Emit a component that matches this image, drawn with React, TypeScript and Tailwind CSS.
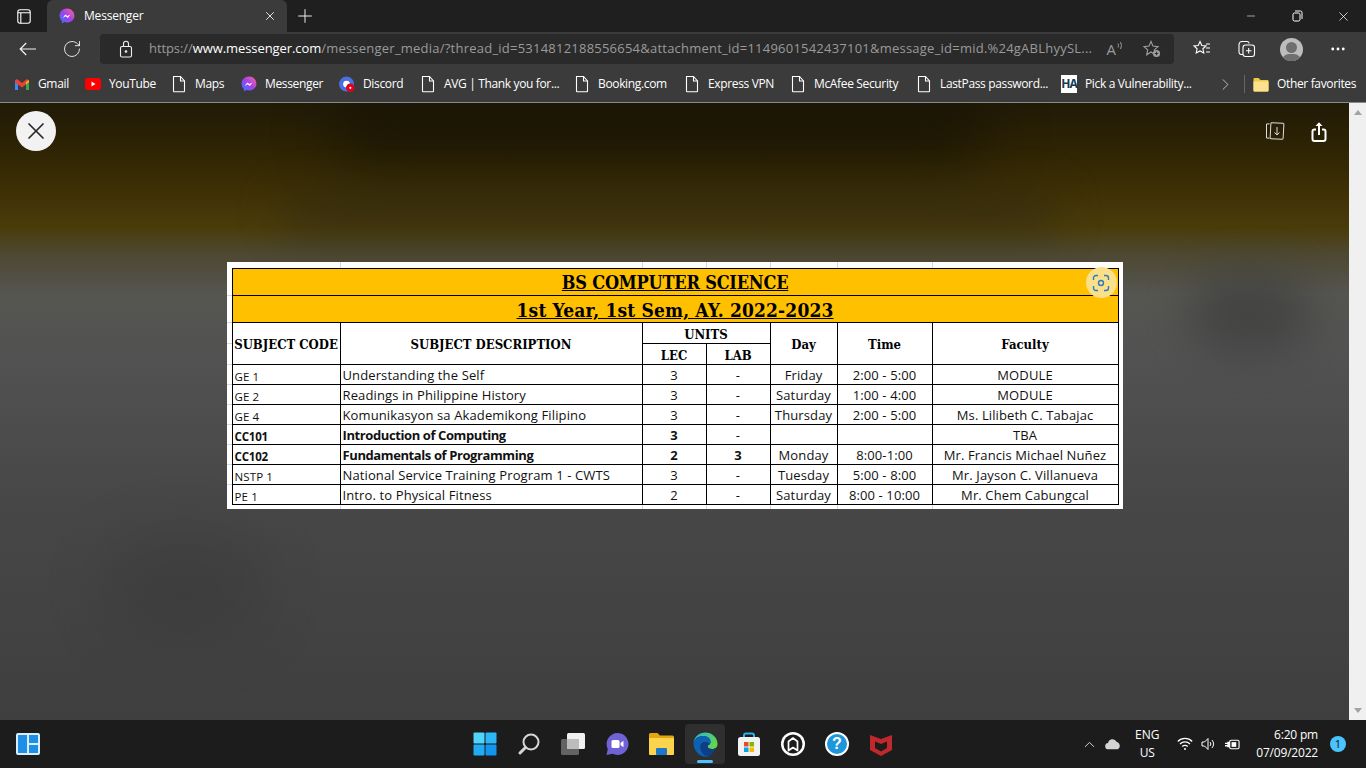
import { ChevronRight, ChevronUp, Minus, MoreHorizontal, Plus, RotateCw, X } from "lucide-react";

const sans = "font-['Open_Sans','Noto_Sans',sans-serif]";
const serif = "font-['DejaVu_Serif_Condensed','Liberation_Serif',serif]";

const rows = [
  { code: "GE 1", desc: "Understanding the Self", lec: "3", lab: "-", day: "Friday", time: "2:00 - 5:00", faculty: "MODULE" },
  { code: "GE 2", desc: "Readings in Philippine History", lec: "3", lab: "-", day: "Saturday", time: "1:00 - 4:00", faculty: "MODULE" },
  { code: "GE 4", desc: "Komunikasyon sa Akademikong Filipino", lec: "3", lab: "-", day: "Thursday", time: "2:00 - 5:00", faculty: "Ms. Lilibeth C. Tabajac" },
  { code: "CC101", desc: "Introduction of Computing", lec: "3", lab: "-", day: "", time: "", faculty: "TBA", bold: true },
  { code: "CC102", desc: "Fundamentals of Programming", lec: "2", lab: "3", day: "Monday", time: "8:00-1:00", faculty: "Mr. Francis Michael Nuñez", bold: true },
  { code: "NSTP 1", desc: "National Service Training Program 1 - CWTS", lec: "3", lab: "-", day: "Tuesday", time: "5:00 - 8:00", faculty: "Mr. Jayson C. Villanueva" },
  { code: "PE 1", desc: "Intro. to Physical Fitness", lec: "2", lab: "-", day: "Saturday", time: "8:00 - 10:00", faculty: "Mr. Chem Cabungcal" },
];

// sheet gridlines peeking out round the table
const gridCols = ["w-[114px]", "w-[302px]", "w-[64px]", "w-[64px]", "w-[67px]", "w-[95px]"];
const gridRows = [33, 60, 81, 102, 122, 142, 162, 182, 202, 222];

function MessengerIcon({ size = 16 }: { size?: number }) {
  return (
    <svg width={size} height={size} viewBox="0 0 16 16">
      <defs>
        <linearGradient id="msg" x1="0" y1="1" x2="1" y2="0">
          <stop offset="0" stopColor="#2f7bff" />
          <stop offset="0.5" stopColor="#a33ef0" />
          <stop offset="1" stopColor="#ff6a8a" />
        </linearGradient>
      </defs>
      <path d="M8 .6C3.8.6.6 3.6.6 7.7c0 2.1.9 4 2.3 5.2v2.5l2.3-1.3c.9.3 1.8.4 2.8.4 4.2 0 7.4-3 7.4-6.8S12.2.6 8 .6z" fill="url(#msg)" />
      <path d="M3.7 9.9 6.2 6.4l2.3 1.7 2.9-1.7-2.5 3.5-2.3-1.7z" fill="#fff" />
    </svg>
  );
}

function FileIcon() {
  return (
    <svg width="16" height="18" viewBox="0 0 16 18" fill="none" stroke="#fff" strokeWidth="1.1">
      <path d="M2.5 1.5h7l4 4.5v10a.8.8 0 0 1-.8.8H3.3a.8.8 0 0 1-.8-.8z" />
      <path d="M9.5 1.5V6h4" />
    </svg>
  );
}

function Bookmark({ icon, label, width }: { icon: React.ReactNode; label: string; width: string }) {
  return (
    <div className={`flex items-center gap-2 shrink-0 ${width}`}>
      <span className="flex w-4 h-4 items-center justify-center shrink-0">{icon}</span>
      <span className="text-[12px] text-white whitespace-nowrap tracking-[-0.35px]">{label}</span>
    </div>
  );
}

function TitleBar() {
  return (
    <div className="h-8 bg-[#1f1f1f] flex items-end shrink-0 text-white">
      <div className="w-[47px] h-8 flex items-center justify-center">
        <svg width="14" height="15" viewBox="0 0 14 15" fill="none" stroke="#fff" strokeWidth="1.1">
          <rect x=".8" y=".8" width="12.4" height="13.4" rx="2.2" />
          <path d="M.8 3.8h12.4M3.8 3.8v10.4" />
        </svg>
      </div>
      <div className="w-[240px] h-8 bg-[#3b3b3b] rounded-t-md flex items-center pl-3 pr-[10px]">
        <MessengerIcon />
        <span className="ml-[9px] text-[12px] tracking-[-0.2px] flex-1">Messenger</span>
        <X size={14} strokeWidth={1.6} color="#eee" />
      </div>
      <div className="w-[36px] h-8 flex items-center justify-center">
        <Plus size={22} strokeWidth={1} />
      </div>
      <div className="flex-1" />
      <div className="flex h-8 items-center">
        <div className="w-[46px] flex justify-center"><Minus size={12} strokeWidth={1.2} /></div>
        <div className="w-[46px] flex justify-center">
          <svg width="11" height="12" viewBox="0 0 11 12" fill="none" stroke="#fff">
            <rect x="1" y="3" width="7" height="8" rx="1.5" />
            <path d="M3 1h5.5A1.5 1.5 0 0 1 10 2.5V9" />
          </svg>
        </div>
        <div className="w-[46px] flex justify-center"><X size={15} strokeWidth={1.2} /></div>
      </div>
    </div>
  );
}

function AddressBar() {
  return (
    <div className="h-[34px] bg-[#3b3b3b] flex items-center shrink-0 text-white">
      <div className="w-[56px] flex justify-center">
        <svg width="18" height="14" viewBox="0 0 18 14" fill="none" stroke="#f4f4f4" strokeWidth="1.2">
          <path d="M17 7H1.2M7.2 1 1.2 7l6 6" />
        </svg>
      </div>
      <div className="w-[32px] flex justify-center"><RotateCw size={20} strokeWidth={1} /></div>
      <div className="ml-[12px] w-[1074px] h-[30px] bg-[#2a2a2a] rounded flex items-center pl-[19px] pr-[12px]">
        <svg width="14" height="18" viewBox="0 0 14 18" fill="none" stroke="#eee" strokeWidth="1.1" className="shrink-0">
          <rect x="1.5" y="6.5" width="11" height="10.5" rx="1.5" />
          <path d="M4.5 6.5V3.8a2.5 2.5 0 0 1 5 0v2.7" />
          <circle cx="7" cy="11.5" r=".8" fill="#eee" />
        </svg>
        <div className="ml-[16px] text-[13px] whitespace-nowrap text-[#9a9a9a] w-[945px] shrink-0 tracking-[0.23px]">
          <span className="tracking-[-0.08px]">https://</span>
          <span className="text-white tracking-[-0.08px]">www.messenger.com</span>
          /messenger_media/?thread_id=5314812188556654&amp;attachment_id=1149601542437101&amp;message_id=mid.%24gABLhyySL...
        </div>
        <div className="flex-1" />
        <span className="text-[15px] leading-none text-[#9a9a9a] mr-[1px]">A</span>
        <svg width="6" height="10" viewBox="0 0 6 10" fill="none" stroke="#9a9a9a" className="mr-[19px] -mt-[6px]">
          <path d="M1 2.5a4 4 0 0 1 0 4M3.5 1a7 7 0 0 1 0 7" />
        </svg>
        <svg width="20" height="20" viewBox="0 0 20 20" fill="none" stroke="#a0a0a0" strokeWidth="1.1">
          <path d="M9 2.5l2 4.6 5 .5-3.7 3.3 1 4.9L9 13l-4.3 2.8 1-4.9L2 7.6l5-.5z" />
          <circle cx="14.5" cy="14.5" r="3.6" fill="#a0a0a0" stroke="none" />
          <path d="M14.5 12.7v3.6M12.7 14.5h3.6" stroke="#333" />
        </svg>
      </div>
      <div className="ml-[16px] w-6 flex justify-center">
        <svg width="20" height="20" viewBox="0 0 20 20" fill="none" stroke="#fff" strokeWidth="1.1">
          <path d="M8 2.5l1.8 4 4.2.5-3.1 2.8.9 4.2L8 11.9l-3.8 2.1.9-4.2L2 7l4.2-.5z" />
          <path d="M14 5h4M14 9h4M14 13h4" />
        </svg>
      </div>
      <div className="ml-[21px] w-6 flex justify-center">
        <svg width="20" height="20" viewBox="0 0 20 20" fill="none" stroke="#fff" strokeWidth="1.1">
          <path d="M6 15.5H4.5A2.5 2.5 0 0 1 2 13V5.5A3 3 0 0 1 5 2.5h5a2 2 0 0 1 2 2" />
          <rect x="6" y="6" width="11.5" height="11.5" rx="2.5" />
          <path d="M11.7 9v5.5M9 11.7h5.5" />
        </svg>
      </div>
      <div className="ml-[21px] w-[23px] h-[23px] rounded-full bg-[#bdbdbd] overflow-hidden relative">
        <div className="absolute left-[6px] top-[4px] w-[11px] h-[11px] rounded-full bg-[#6f6f6f]" />
        <div className="absolute left-[2px] top-[16px] w-[19px] h-[14px] rounded-full bg-[#6f6f6f]" />
      </div>
      <div className="ml-[25px] w-5 flex justify-center"><MoreHorizontal size={18} strokeWidth={1.8} /></div>
    </div>
  );
}

function BookmarksBar() {
  return (
    <div className="h-[37px] bg-[#3b3b3b] border-b border-[#8a8a8a] flex items-center shrink-0 pl-[14px]">
      <Bookmark
        width="w-[71px]"
        label="Gmail"
        icon={
          <svg width="16" height="13" viewBox="0 0 16 13">
            <path d="M1 12V2l3 2.3V12z" fill="#4285f4" />
            <path d="M12 12V4.3L15 2v10z" fill="#34a853" />
            <path d="M1 2.5 3 1l5 3.9L13 1l2 1.5V4L12 6.5 8 9.5 4 6.5 1 4z" fill="#ea4335" />
            <path d="M12 4.3 15 2v2l-3 2.5z" fill="#fbbc04" />
          </svg>
        }
      />
      <Bookmark
        width="w-[86px]"
        label="YouTube"
        icon={
          <svg width="16" height="12" viewBox="0 0 16 12">
            <rect width="16" height="12" rx="3" fill="#f00" />
            <path d="M6.5 3.5v5l4-2.5z" fill="#fff" />
          </svg>
        }
      />
      <Bookmark width="w-[70px]" label="Maps" icon={<FileIcon />} />
      <Bookmark width="w-[98px]" label="Messenger" icon={<MessengerIcon />} />
      <Bookmark
        width="w-[81px]"
        label="Discord"
        icon={
          <svg width="17" height="17" viewBox="0 0 17 17">
            <circle cx="8" cy="8" r="8" fill="#4a6fe0" />
            <circle cx="8" cy="8" r="3.6" fill="#fff" />
            <circle cx="12" cy="12" r="4.5" fill="#e2001a" />
            <circle cx="12" cy="12" r="1.2" fill="#fff" />
          </svg>
        }
      />
      <Bookmark width="w-[154px]" label="AVG | Thank you for..." icon={<FileIcon />} />
      <Bookmark width="w-[110px]" label="Booking.com" icon={<FileIcon />} />
      <Bookmark width="w-[106px]" label="Express VPN" icon={<FileIcon />} />
      <Bookmark width="w-[126px]" label="McAfee Security" icon={<FileIcon />} />
      <Bookmark width="w-[145px]" label="LastPass password..." icon={<FileIcon />} />
      <Bookmark
        width="w-[155px]"
        label="Pick a Vulnerability..."
        icon={
          <span className="w-4 h-[18px] bg-white text-[#123a55] text-[12px] font-bold flex items-center justify-center leading-none tracking-[-1px]">HA</span>
        }
      />
      <ChevronRight size={19} strokeWidth={1} color="#ddd" className="shrink-0" />
      <div className="w-px h-[18px] bg-[#666] ml-[9px] mr-[8px] shrink-0" />
      <Bookmark
        width="w-[105px]"
        label="Other favorites"
        icon={
          <svg width="16" height="15" viewBox="0 0 16 15">
            <path d="M.5 2A1 1 0 0 1 1.5 1h4l2 2h7a1 1 0 0 1 1 1v9.5a1 1 0 0 1-1 1h-13a1 1 0 0 1-1-1z" fill="#f2c84b" />
            <path d="M.5 4.5h15v9a1 1 0 0 1-1 1h-13a1 1 0 0 1-1-1z" fill="#fbe38e" />
          </svg>
        }
      />
    </div>
  );
}

function GridStrip({ className }: { className: string }) {
  return (
    <div className={`absolute left-0 right-0 flex ${className}`}>
      {gridCols.map((w, i) => (
        <div key={i} className={`${w} border-r border-[#d4d8e4]`} />
      ))}
    </div>
  );
}

function ScheduleImage() {
  const cell = "border border-black p-0 pt-[1px] text-center text-[13px] leading-none h-5 text-[#111] tracking-[0.12px]";
  const head = `border border-black p-0 pt-[1px] text-center ${serif} font-bold text-[13px] leading-none text-black`;
  const title = `border border-black p-0 pt-[2px] bg-[#ffc000] text-center ${serif} font-bold leading-none underline text-black`;
  return (
    <div className="relative w-[896px] h-[247px] bg-white pl-[5px] pt-[6px] overflow-hidden">
      <GridStrip className="top-0 h-[6px]" />
      <GridStrip className="bottom-0 h-[5px]" />
      {gridRows.map((y) => (
        <div key={y} className="absolute left-0 w-full h-px" style={{ top: y }}>
          <div className="w-[5px] h-px bg-[#d4d8e4]" />
        </div>
      ))}
      <table className="relative table-fixed border-collapse w-[886px] bg-white font-['Open_Sans','Noto_Sans',sans-serif]">
        <colgroup>
          <col className="w-[108px]" />
          <col className="w-[302px]" />
          <col className="w-[64px]" />
          <col className="w-[64px]" />
          <col className="w-[67px]" />
          <col className="w-[95px]" />
          <col className="w-[186px]" />
        </colgroup>
        <tbody>
          <tr className="h-[27px]">
            <td colSpan={7} className={`${title} text-[18px] tracking-[-0.2px]`}>BS COMPUTER SCIENCE</td>
          </tr>
          <tr className="h-[27px]">
            <td colSpan={7} className={`${title} text-[19px] tracking-[0.15px]`}>1st Year, 1st Sem, AY. 2022-2023</td>
          </tr>
          <tr className="h-[21px]">
            <td rowSpan={2} className={`${head} whitespace-nowrap`}>SUBJECT CODE</td>
            <td rowSpan={2} className={head}>SUBJECT DESCRIPTION</td>
            <td colSpan={2} className={`${head} !pt-[3px]`}>UNITS</td>
            <td rowSpan={2} className={head}>Day</td>
            <td rowSpan={2} className={head}>Time</td>
            <td rowSpan={2} className={head}>Faculty</td>
          </tr>
          <tr className="h-[21px]">
            <td className={`${head} !pt-[3px]`}>LEC</td>
            <td className={`${head} !pt-[3px]`}>LAB</td>
          </tr>
          {rows.map((r) => (
            <tr key={r.code} className="h-5">
              <td className={`${cell} !text-left pl-[2px] !pt-0 !text-[11.5px] align-bottom pb-[2px] ${r.bold ? "font-bold !tracking-[-0.2px]" : ""}`}>{r.code}</td>
              <td className={`${cell} !text-left pl-[2px] ${r.bold ? "font-bold !tracking-[-0.4px]" : ""}`}>{r.desc}</td>
              <td className={`${cell} ${r.bold ? "font-bold" : ""}`}>{r.lec}</td>
              <td className={`${cell} ${r.code === "CC102" ? "font-bold" : ""}`}>{r.lab}</td>
              <td className={cell}>{r.day}</td>
              <td className={cell}>{r.time}</td>
              <td className={cell}>{r.faculty}</td>
            </tr>
          ))}
        </tbody>
      </table>
      <div className="absolute right-[6px] top-[5px] w-[31px] h-[31px] rounded-full bg-[#fbe08a] flex items-center justify-center">
        <svg width="18" height="18" viewBox="0 0 18 18" fill="none" stroke="#2f78c4" strokeWidth="1.4">
          <path d="M1.5 6V4a2.5 2.5 0 0 1 2.5-2.5h2M12 1.5h2A2.5 2.5 0 0 1 16.5 4v2M16.5 12v2a2.5 2.5 0 0 1-2.5 2.5h-2M6 16.5H4A2.5 2.5 0 0 1 1.5 14v-2" />
          <circle cx="9" cy="9" r="2.5" />
        </svg>
      </div>
    </div>
  );
}

function Viewer() {
  return (
    <div className="flex-1 flex min-h-0">
      <div className="flex-1 relative overflow-hidden bg-[linear-gradient(to_bottom,#211a06_0px,#2c2204_40px,#3f3105_90px,#4a3c0a_125px,#4d4830_150px,#555551_190px,#525252_250px,#474747_400px,#3f3f3f_617px)]">
        {/* blurred photo backdrop */}
        <div className="absolute left-[330px] top-[-10px] w-[660px] h-[70px] rounded-full bg-[#120e04] opacity-60 blur-[30px]" />
        <div className="absolute left-[280px] top-[90px] w-[780px] h-[40px] rounded-full bg-[#2a2618] opacity-50 blur-[22px]" />
        <div className="absolute left-[100px] top-[430px] w-[170px] h-[110px] rounded-full bg-[#333333] opacity-35 blur-[30px]" />
        <div className="absolute left-[1190px] top-[170px] w-[120px] h-[80px] rounded-full bg-[#3d3d3d] opacity-70 blur-[22px]" />
        <div className="relative flex justify-between items-center pl-4 pr-[22px] pt-2">
          <div className="w-10 h-10 rounded-full bg-[#f2f2f2] flex items-center justify-center">
            <X size={28} strokeWidth={1.5} color="#2a2a2a" />
          </div>
          <div className="flex items-center gap-[26px]">
            <svg width="20" height="20" viewBox="0 0 20 20" fill="none" stroke="#ddd" strokeWidth="1">
              <path d="M4.5 2.8 1.5 3v14l3 .2" />
              <rect x="5.5" y="2" width="13" height="16" rx="1" transform="rotate(3 12 10)" />
              <path d="M12 6v8M9.5 11.5 12 14l2.5-2.5" />
            </svg>
            <svg width="16" height="21" viewBox="0 0 16 21" fill="none" stroke="#fff" strokeWidth="2">
              <path d="M5 8.5H3.5a2 2 0 0 0-2 2V18a2 2 0 0 0 2 2h9a2 2 0 0 0 2-2v-7.5a2 2 0 0 0-2-2H11" />
              <path d="M8 14V2" />
              <path d="M4.5 5 8 1.2 11.5 5z" fill="#fff" stroke="none" />
            </svg>
          </div>
        </div>
        <div className="relative mt-[111px] flex justify-center">
          <ScheduleImage />
        </div>
      </div>
      <div className="w-[17px] bg-[#f0f0f0] flex flex-col items-center justify-between py-[7px]">
        <span className="w-0 h-0 border-x-[4px] border-x-transparent border-b-[5px] border-b-[#a3a3a3]" />
        <span className="w-0 h-0 border-x-[4px] border-x-transparent border-t-[5px] border-t-[#a3a3a3]" />
      </div>
    </div>
  );
}

function Taskbar() {
  return (
    <div className="h-12 bg-[#1c1c1c] shrink-0 flex items-center relative text-white">
      <div className="absolute left-[16px] top-[13px]">
        <svg width="24" height="22" viewBox="0 0 24 22">
          <rect width="24" height="22" rx="2" fill="#d8eefc" />
          <rect x="2" y="2" width="9" height="18" fill="#1f8fe6" />
          <rect x="13" y="2" width="9" height="8" fill="#1f8fe6" />
          <rect x="13" y="12" width="9" height="8" fill="#1f8fe6" />
        </svg>
      </div>
      <div className="ml-[463px] flex items-center">
        <div className="w-[44px] flex justify-center">
          <svg width="24" height="24" viewBox="0 0 24 24">
            <rect x="0.5" y="0.5" width="11" height="11" rx="1" fill="#4fd4fb" />
            <rect x="12.5" y="0.5" width="11" height="11" rx="1" fill="#2cb5f7" />
            <rect x="0.5" y="12.5" width="11" height="11" rx="1" fill="#22abf5" />
            <rect x="12.5" y="12.5" width="11" height="11" rx="1" fill="#1295ef" />
          </svg>
        </div>
        <div className="w-[44px] flex justify-center">
          <svg width="24" height="24" viewBox="0 0 24 24" fill="none" stroke="#d6d6d6" strokeWidth="2">
            <circle cx="14" cy="10" r="7.5" />
            <path d="M8.5 15.5 3 21" strokeLinecap="round" strokeWidth="3" />
          </svg>
        </div>
        <div className="w-[44px] flex justify-center">
          <svg width="24" height="22" viewBox="0 0 24 22">
            <rect x="6" y="0" width="18" height="16" rx="1.5" fill="#f1f1f1" />
            <rect x="0" y="6" width="18" height="16" rx="1.5" fill="#6b6b6b" opacity="0.9" />
            <rect x="6" y="6" width="12" height="10" fill="#bdbdbd" />
          </svg>
        </div>
        <div className="w-[44px] flex justify-center">
          <svg width="24" height="24" viewBox="0 0 24 24">
            <path d="M12.5 1a11 11 0 1 1-5 20.8L1.5 23l1.3-6A11 11 0 0 1 12.5 1z" fill="#6e62d4" />
            <rect x="6.5" y="8" width="8" height="8" rx="1.5" fill="#fff" />
            <path d="M15.5 11l3-2.2v6.4l-3-2.2z" fill="#fff" />
          </svg>
        </div>
        <div className="w-[44px] flex justify-center">
          <svg width="25" height="22" viewBox="0 0 25 22">
            <path d="M0 1.5A1.5 1.5 0 0 1 1.5 0h7l2.5 2.5h12.5A1.5 1.5 0 0 1 25 4v16.5a1.5 1.5 0 0 1-1.5 1.5h-22A1.5 1.5 0 0 1 0 20.5z" fill="#e5a50f" />
            <path d="M0 5h25v15.5a1.5 1.5 0 0 1-1.5 1.5h-22A1.5 1.5 0 0 1 0 20.5z" fill="#fcd34d" />
            <rect x="7" y="15" width="11" height="7" rx="1" fill="#1d78c8" />
          </svg>
        </div>
        <div className="w-[40px] h-[40px] rounded bg-[#2f2f2f] flex justify-center items-center relative mx-[2px]">
          <svg width="25" height="25" viewBox="0 0 25 25">
            <defs>
              <linearGradient id="edge" x1="0" y1="0" x2="1" y2="0.6">
                <stop offset="0" stopColor="#2bb3d8" />
                <stop offset="1" stopColor="#62d64e" />
              </linearGradient>
            </defs>
            <path d="M12.5 0.5C18.5 0.5 24.5 5 24.5 12c0 4-3 5-5.5 5-3 0-4.5-1.5-4.5-2.5 0-2 3-1 3-4.5 0-3.5-3-6-7-6C5.5 4 1.5 6.5.5 11 1 5 6 .5 12.5.5z" fill="url(#edge)" />
            <path d="M.5 11C1.5 6.5 5.5 4 10.5 4c4 0 7 2.5 7 6 0 1-.5 1.5-1 2-2-3-9-3-9 3 0 4 3 8 8 9.5C7 26 .5 19 .5 11z" fill="#0b62b5" />
            <path d="M7.5 15c0-6 7-6 9-3-1 1-2 1.5-2 2.5 0 1 1.5 2.5 4.5 2.5 1.2 0 2.5-.2 3.5-1-1.5 5-5 8-8 8.5-4.5-1-7-5-7-9.5z" fill="#0d3f86" />
          </svg>
          <span className="absolute bottom-[1px] left-[12px] w-4 h-[3px] rounded-full bg-[#4cc2ff]" />
        </div>
        <div className="w-[44px] flex justify-center">
          <svg width="24" height="24" viewBox="0 0 24 24">
            <path d="M7 6V3.5A2 2 0 0 1 9 1.5h6a2 2 0 0 1 2 2V6" fill="none" stroke="#2bb0f0" strokeWidth="2" />
            <rect x="1" y="5" width="22" height="19" rx="2.5" fill="#f2f2f2" />
            <rect x="7" y="10" width="4.5" height="4.5" fill="#ea4b24" />
            <rect x="12.5" y="10" width="4.5" height="4.5" fill="#7fba00" />
            <rect x="7" y="15.5" width="4.5" height="4.5" fill="#00a4ef" />
            <rect x="12.5" y="15.5" width="4.5" height="4.5" fill="#ffb900" />
          </svg>
        </div>
        <div className="w-[44px] flex justify-center">
          <svg width="24" height="24" viewBox="0 0 24 24" fill="none">
            <circle cx="12" cy="12" r="12" fill="#fff" />
            <circle cx="12" cy="12" r="9.5" fill="#1c1c1c" />
            <path d="M7.5 18.5V9.5L12 6l4.5 3.5v9L12 15.5z" stroke="#fff" strokeWidth="1.7" strokeLinejoin="round" />
          </svg>
        </div>
        <div className="w-[44px] flex justify-center">
          <span className="w-6 h-6 rounded-full bg-[#1e96dc] border-2 border-white flex items-center justify-center text-white font-bold text-[16px] leading-none font-['Liberation_Sans',sans-serif]">?</span>
        </div>
        <div className="w-[44px] flex justify-center">
          <svg width="22" height="24" viewBox="0 0 22 24">
            <path d="M0 3 11 7 22 3v15l-11 6-11-6zM5 9.5v6.5l6 3.5 6-3.5V9.5l-6 2.5z" fill="#c0282c" fillRule="evenodd" />
          </svg>
        </div>
      </div>
      <div className="absolute right-[20px] top-0 h-12 flex items-center">
        <ChevronUp size={17} strokeWidth={1.2} color="#eee" className="mr-[7px]" />
        <svg width="16" height="12" viewBox="0 0 18 12" className="mr-[14px]">
          <path d="M4 12a3.5 3.5 0 0 1-.5-7A5 5 0 0 1 13 3.5 4.5 4.5 0 0 1 14 12z" fill="#d4d4d4" />
        </svg>
        <div className="text-[12px] leading-[18px] text-center w-[24px] mr-[18px] flex flex-col items-center">
          <span>ENG</span>
          <span>US</span>
        </div>
        <svg width="16" height="14" viewBox="0 0 16 14" fill="none" stroke="#fff" strokeWidth="1.2" className="mr-[8px]">
          <path d="M.8 4.5a10 10 0 0 1 14.4 0M3 7a7 7 0 0 1 10 0M5.3 9.5a3.8 3.8 0 0 1 5.4 0" />
          <circle cx="8" cy="12" r="1" fill="#fff" stroke="none" />
        </svg>
        <svg width="14" height="14" viewBox="0 0 14 14" fill="none" stroke="#fff" strokeWidth="1" className="mr-[10px]">
          <path d="M1 5h2.5L7 1.5v11L3.5 9H1z" />
          <path d="M9 5a3 3 0 0 1 0 4M11 3a6 6 0 0 1 0 8" />
        </svg>
        <svg width="15" height="11" viewBox="0 0 16 11" className="mr-[16px]">
          <rect x="5" y="1" width="10" height="9" rx="1.5" fill="none" stroke="#fff" strokeWidth="1.2" />
          <rect x="7" y="3" width="5" height="5" fill="#fff" />
          <path d="M0 3.5h3V5H0zM0 6h3v1.5H0zM2.5 2.5H5v6H2.5z" fill="#fff" />
        </svg>
        <div className="text-[12px] leading-[18px] text-right mr-[12px] tracking-[-0.2px]">
          <div>6:20 pm</div>
          <div>07/09/2022</div>
        </div>
        <span className="w-4 h-4 rounded-full bg-[#4cc2ff] text-[#111] text-[11px] flex items-center justify-center">1</span>
      </div>
    </div>
  );
}

export default function App() {
  return (
    <div className={`w-[1366px] h-[768px] flex flex-col overflow-hidden ${sans}`}>
      <TitleBar />
      <AddressBar />
      <BookmarksBar />
      <Viewer />
      <Taskbar />
    </div>
  );
}
